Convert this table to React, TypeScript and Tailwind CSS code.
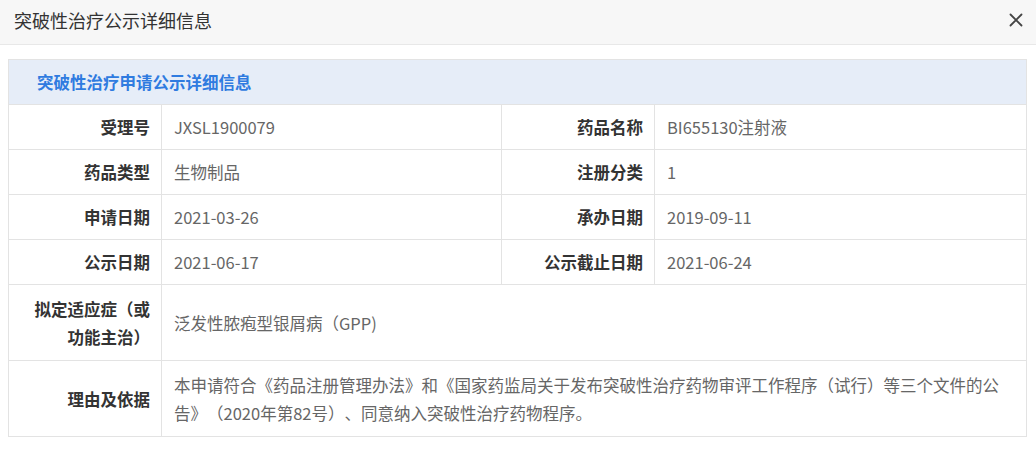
import React from "react";

type Row = { label: string; value: string; label2?: string; value2?: string; tall?: boolean };

const rows: Row[] = [
  { label: "受理号", value: "JXSL1900079", label2: "药品名称", value2: "BI655130注射液" },
  { label: "药品类型", value: "生物制品", label2: "注册分类", value2: "1" },
  { label: "申请日期", value: "2021-03-26", label2: "承办日期", value2: "2019-09-11" },
  { label: "公示日期", value: "2021-06-17", label2: "公示截止日期", value2: "2021-06-24" },
  { label: "拟定适应症（或功能主治）", value: "泛发性脓疱型银屑病（GPP)", tall: true },
  {
    label: "理由及依据",
    value:
      "本申请符合《药品注册管理办法》和《国家药监局关于发布突破性治疗药物审评工作程序（试行）等三个文件的公告》（2020年第82号）、同意纳入突破性治疗药物程序。",
    tall: true,
  },
];

const labelCls =
  "border border-[#e3e3e3] text-right font-bold text-[#333] pl-[12px] pr-[11px] leading-[28px] align-middle";
const valueCls = "border border-[#e3e3e3] text-left text-[#666] pl-[12px] pr-[12px] leading-[28px] align-middle";

export default function App() {
  return (
    <div
      className="w-[1036px] h-[451px] bg-white overflow-hidden [text-spacing-trim:space-all]"
      style={{ fontFamily: '"Noto Sans CJK SC", "Noto Sans", sans-serif' }}
    >
      <div className="h-[45px] bg-[#f7f7f7] border-b border-[#e8e8e8] flex items-start justify-between pt-[7px] pl-[14px] pr-[12px]">
        <span className="text-[18px] leading-[26px] text-[#333]">突破性治疗公示详细信息</span>
        <svg width="16" height="16" viewBox="0 0 16 16" className="mt-[5px]">
          <path d="M2.5 2.5 L13.5 13.5 M13.5 2.5 L2.5 13.5" stroke="#444" strokeWidth="1.8" strokeLinecap="round" />
        </svg>
      </div>

      <div className="pt-[14px] pl-[8px] pr-[9px]">
        <table className="w-full table-fixed border-collapse text-[16.5px]">
          <colgroup>
            <col className="w-[153px]" />
            <col className="w-[340px]" />
            <col className="w-[153px]" />
            <col />
          </colgroup>
          <tbody>
            <tr className="h-[45px]">
              <td
                colSpan={4}
                className="border border-[#e3e3e3] bg-[#e6edf8] pl-[28px] font-bold text-[#2f7be0] align-middle"
              >
                突破性治疗申请公示详细信息
              </td>
            </tr>
            {rows.map((r, i) => (
              <tr key={i} className={r.tall ? "h-[76px]" : "h-[45px]"}>
                <td className={labelCls}>{r.label}</td>
                {r.label2 ? (
                  <>
                    <td className={valueCls}>{r.value}</td>
                    <td className={labelCls}>{r.label2}</td>
                    <td className={valueCls}>{r.value2}</td>
                  </>
                ) : (
                  <td colSpan={3} className={valueCls}>
                    {r.value}
                  </td>
                )}
              </tr>
            ))}
          </tbody>
        </table>
      </div>
    </div>
  );
}
